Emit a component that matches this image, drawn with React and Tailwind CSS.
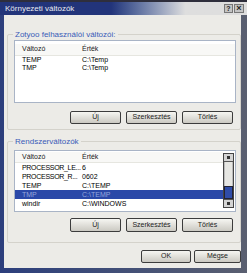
export default function App() {
  const btn =
    "h-[13px] flex items-center justify-center border border-[#3c3c3c] rounded-[2px] bg-gradient-to-b from-[#f6f6f2] to-[#cbc9c2] text-[7px] text-[#222]";
  const name = "w-[67px] pl-[7px] whitespace-nowrap overflow-hidden";
  return (
    <div
      className="w-[247px] h-[273px] bg-gradient-to-r from-[#2c3e7c] to-[#5a5f70] flex flex-col overflow-hidden"
      style={{ fontFamily: '"Liberation Sans", Arial, sans-serif' }}
    >
      {/* title bar */}
      <div className="h-[15px] flex items-center justify-between bg-gradient-to-r from-[#22347a] from-45% to-[#dedede] to-75% border-t-[2px] border-[#2e2e3c] pl-[5px] pr-[3px]">
        <span className="text-[8px] leading-[9px] text-white opacity-90">Környezeti változók</span>
        <div className="flex gap-[1px]">
          <div className="w-[9px] h-[9px] bg-[#c4c4c4] border border-[#777] text-[7px] leading-[7px] text-center font-bold text-[#222]">?</div>
          <div className="w-[10px] h-[9px] bg-[#c4c4c4] border border-[#777] text-[9px] leading-[7px] text-center font-bold text-[#222]">×</div>
        </div>
      </div>
      {/* body */}
      <div className="flex-1 ml-[4px] mr-[6px] mb-[5px] bg-[#ecebe7] flex flex-col pl-[3px] pt-[19px]">
        {/* group 1 */}
        <div className="relative border border-[#d4d2cb] rounded-[2px] h-[96px] pl-[6px] pr-[4px] pt-[5px] flex flex-col">
          <span className="absolute -top-[5px] left-[5px] bg-[#ecebe7] px-[2px] text-[8px] leading-[9px] text-[#3a5bb8]">
            Zotyoo felhasználói változói:
          </span>
          <div className="h-[63px] bg-white border border-[#a9b4c6] flex flex-col">
            <div className="h-[12px] flex items-center text-[7px] text-[#222] bg-[#f8f8f6] border-b border-[#e6e6e0] mt-[3px]">
              <span className={name}>Változó</span>
              <span>Érték</span>
            </div>
            <div className="flex flex-col text-[7px] leading-[8px] text-black">
              <div className="flex"><span className={name}>TEMP</span><span>C:\Temp</span></div>
              <div className="flex"><span className={name}>TMP</span><span>C:\Temp</span></div>
            </div>
          </div>
          <div className="flex justify-end gap-[5px] mt-[8px] pr-[3px]">
            <div className={btn + " w-[51px]"}>Új</div>
            <div className={btn + " w-[51px]"}>Szerkesztés</div>
            <div className={btn + " w-[51px]"}>Törlés</div>
          </div>
        </div>
        {/* group 2 */}
        <div className="relative border border-[#d4d2cb] rounded-[2px] h-[102px] mt-[11px] pl-[6px] pr-[4px] pt-[8px] flex flex-col">
          <span className="absolute -top-[5px] left-[5px] bg-[#ecebe7] px-[2px] text-[8px] leading-[9px] text-[#3a5bb8]">
            Rendszerváltozók
          </span>
          <div className="h-[62px] bg-white border border-[#a9b4c6] flex">
            <div className="flex-1 flex flex-col">
              <div className="h-[11px] flex items-center text-[7px] text-[#222] bg-[#f8f8f6] border-b border-[#e6e6e0] mt-[1px]">
                <span className={name}>Változó</span>
                <span>Érték</span>
              </div>
              <div className="flex flex-col text-[7px] leading-[9px] text-black">
                <div className="flex"><span className={name + " tracking-[-0.3px]"}>PROCESSOR_LE...</span><span>6</span></div>
                <div className="flex"><span className={name + " tracking-[-0.3px]"}>PROCESSOR_R...</span><span>0602</span></div>
                <div className="flex"><span className={name}>TEMP</span><span>C:\TEMP</span></div>
                <div className="flex bg-[#2a48a8] text-[#93a6dc]"><span className={name}>TMP</span><span>C:\TEMP</span></div>
                <div className="flex"><span className={name}>windir</span><span>C:\WINDOWS</span></div>
              </div>
            </div>
            <div className="w-[11px] mt-[2px] mb-[3px] mr-[1px] border border-[#444] flex flex-col bg-[#e4e4e4]">
              <div className="h-[8px] bg-[#d4d4d4] border-b border-[#555] flex items-center justify-center"><div className="w-[3px] h-[3px] bg-[#333]" /></div>
              <div className="flex-1 flex flex-col">
                <div className="h-[24px] bg-[#e6e6e2] border-x border-[#bbb]" />
                <div className="flex-1 bg-[#2f4ca8] border border-[#223]" />
              </div>
              <div className="h-[8px] bg-[#d4d4d4] border-t border-[#555] flex items-center justify-center"><div className="w-[3px] h-[3px] bg-[#333]" /></div>
            </div>
          </div>
          <div className="flex justify-end gap-[5px] mt-[6px] pr-[3px]">
            <div className={btn + " w-[51px] h-[14px]"}>Új</div>
            <div className={btn + " w-[51px] h-[14px]"}>Szerkesztés</div>
            <div className={btn + " w-[51px] h-[14px]"}>Törlés</div>
          </div>
        </div>
        <div className="flex justify-end gap-[3px] mt-[7px]">
          <div className={btn + " w-[50px] h-[13px]"}>OK</div>
          <div className={btn + " w-[47px] h-[13px]"}>Mégse</div>
        </div>
      </div>
    </div>
  );
}
